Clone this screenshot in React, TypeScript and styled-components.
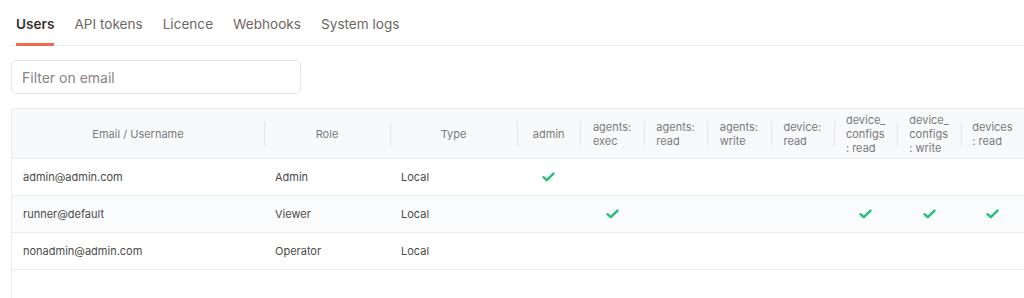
import React, { FunctionComponent, useState } from 'react';
import styled, { createGlobalStyle } from 'styled-components';

const GlobalStyle = createGlobalStyle`
  body {
    margin: 0;
    font-family: Inter, 'Noto Sans', sans-serif;
    background: #fff;
    overflow: hidden;
  }
`;

const Page = styled.div`
  padding: 0 0 0 11px;
  overflow: hidden;
`;

const TabBar = styled.nav`
  display: flex;
  gap: 20px;
  height: 45px;
  padding-left: 5px;
  border-bottom: 1px solid #ececec;
`;

const Tab = styled.button<{ active?: boolean }>`
  border: 0;
  background: none;
  padding: 4px 0 0;
  margin-bottom: -1px;
  font-family: Inter, sans-serif;
  font-size: 13.6px;
  font-weight: ${(props) => (props.active ? 600 : 400)};
  color: ${(props) => (props.active ? '#3a302b' : '#6f6661')};
  border-bottom: 3px solid ${(props) => (props.active ? '#ef6c4d' : 'transparent')};
  cursor: pointer;
`;

const FilterInput = styled.input`
  display: block;
  box-sizing: border-box;
  margin: 14px 0 14px;
  width: 290px;
  height: 34px;
  padding: 0 10px;
  border: 1px solid #e3e3e3;
  border-radius: 5px;
  font-family: Inter, sans-serif;
  font-size: 14px;
  color: #333;
  &::placeholder {
    color: #8a8480;
  }
`;

const TableWrap = styled.div`
  border: 1px solid #ececec;
  border-right: 0;
  min-height: 260px;
  width: max-content;
`;

const Row = styled.div<{ cols: string; striped?: boolean; header?: boolean }>`
  display: grid;
  grid-template-columns: ${(props) => props.cols};
  height: ${(props) => (props.header ? 49 : 36)}px;
  background: ${(props) =>
    props.header ? '#f8f9fa' : props.striped ? '#fafbfc' : '#fff'};
  border-bottom: 1px solid #ececec;
`;

const HeadCell = styled.div<{ first?: boolean }>`
  position: relative;
  display: flex;
  align-items: center;
  justify-content: center;
  font-size: 11px;
  line-height: 14px;
  color: #7a7a7a;
  padding: 0 8px;

  span {
    text-align: left;
  }

  &::before {
    content: '';
    display: ${(props) => (props.first ? 'none' : 'block')};
    position: absolute;
    left: 0;
    top: 12px;
    bottom: 12px;
    width: 1px;
    background: #e6e6e6;
  }
`;

const Cell = styled.div<{ center?: boolean }>`
  display: flex;
  align-items: center;
  justify-content: ${(props) => (props.center ? 'center' : 'flex-start')};
  padding: 0 11px;
  font-size: 11px;
  color: #4a4a4a;
`;

const Check = () => (
  <svg width="13" height="10" viewBox="0 0 13 10">
    <path
      d="M1.5 5.2 L4.8 8.2 L11.5 1.6"
      fill="none"
      stroke="#27be7b"
      strokeWidth="2.4"
      strokeLinecap="round"
      strokeLinejoin="round"
    />
  </svg>
);

const TABS = ['Users', 'API tokens', 'Licence', 'Webhooks', 'System logs'];

const PERMS: string[][] = [
  ['admin'],
  ['agents:', 'exec'],
  ['agents:', 'read'],
  ['agents:', 'write'],
  ['device:', 'read'],
  ['device_', 'configs', ': read'],
  ['device_', 'configs', ': write'],
  ['devices', ': read'],
];

const USERS = [
  { email: 'admin@admin.com', role: 'Admin', type: 'Local', perms: [0] },
  { email: 'runner@default', role: 'Viewer', type: 'Local', perms: [1, 5, 6, 7] },
  { email: 'nonadmin@admin.com', role: 'Operator', type: 'Local', perms: [] as number[] },
];

const COLS = `252px 126px 127px repeat(${PERMS.length}, 63.4px)`;

const App: FunctionComponent = () => {
  const [tab, setTab] = useState('Users');
  const [filter, setFilter] = useState('');

  const rows = USERS.filter((u) => u.email.includes(filter));

  return (
    <Page>
      <GlobalStyle />
      <TabBar>
        {TABS.map((t) => (
          <Tab key={t} active={t === tab} onClick={() => setTab(t)}>
            {t}
          </Tab>
        ))}
      </TabBar>
      <FilterInput
        placeholder="Filter on email"
        value={filter}
        onChange={(e) => setFilter(e.target.value)}
      />
      <TableWrap>
        <Row cols={COLS} header>
          <HeadCell first>Email / Username</HeadCell>
          <HeadCell>Role</HeadCell>
          <HeadCell>Type</HeadCell>
          {PERMS.map((p) => (
            <HeadCell key={p.join('')}>
              <span>
                {p.map((line, i) => (
                  <React.Fragment key={i}>
                    {i > 0 && <br />}
                    {line}
                  </React.Fragment>
                ))}
              </span>
            </HeadCell>
          ))}
        </Row>
        {rows.map((u, idx) => (
          <Row key={u.email} cols={COLS} striped={idx % 2 === 1}>
            <Cell>{u.email}</Cell>
            <Cell>{u.role}</Cell>
            <Cell>{u.type}</Cell>
            {PERMS.map((p, i) => (
              <Cell key={p.join('')} center>
                {u.perms.includes(i) && <Check />}
              </Cell>
            ))}
          </Row>
        ))}
      </TableWrap>
    </Page>
  );
};

export default App;
